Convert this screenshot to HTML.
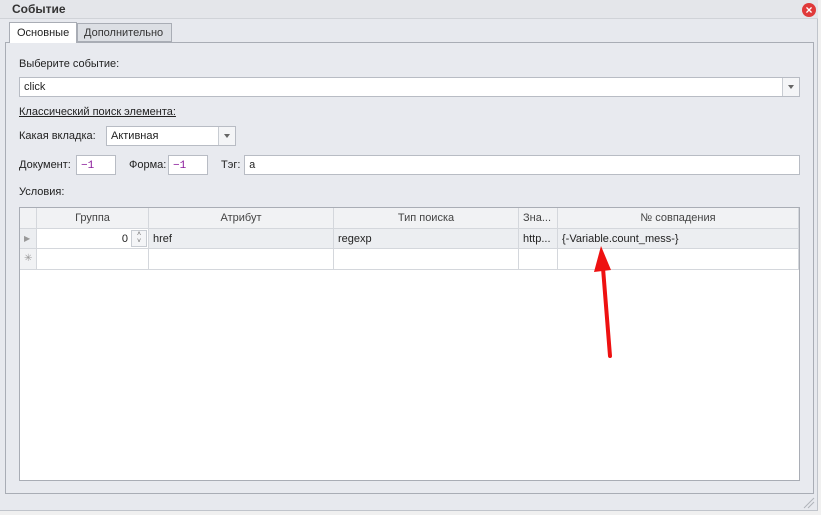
<!DOCTYPE html><html><head><meta charset="utf-8"><style>
*{box-sizing:border-box;margin:0;padding:0}
body{width:821px;height:515px;background:#f0f0f0;font-family:"Liberation Sans",sans-serif;font-size:11px;color:#222;position:relative;overflow:hidden}
.a{position:absolute}
.inp{position:absolute;background:#fff;border:1px solid #b8bcc4;padding:3px 4px;font-size:11px;height:20px;line-height:13px}
.dd{position:absolute;right:0;top:0;width:17px;height:18px;border-left:1px solid #c8ccd2;background:#f4f5f7}
.dd:after{content:"";position:absolute;left:5px;top:7px;border:3px solid transparent;border-top:4px solid #666}
.mono{font-family:"Liberation Mono",monospace;color:#8a1a9a}
.cell{position:absolute;border-right:1px solid #d4d7dc;border-bottom:1px solid #d4d7dc;height:100%;top:0;padding:4px 4px;white-space:nowrap;overflow:hidden}
.row{position:absolute;left:0;width:779px}
</style></head><body>
<div class="a" style="left:0;top:0;width:818px;height:511px;background:#e7e9ee;border-right:1px solid #c0c4cb;border-bottom:1px solid #c0c4cb"></div>
<div class="a" style="left:0;top:0;width:818px;height:19px;background:#e4e6ea;border-bottom:1px solid #d0d3d8"></div>
<div class="a" style="left:12px;top:2px;font-weight:bold;font-size:12px;color:#333">Событие</div>
<div class="a" style="left:802px;top:3px;width:14px;height:14px;border-radius:50%;background:#e03a3a;color:#fff;font-size:12px;font-weight:bold;text-align:center;line-height:14px">×</div>
<div class="a" style="left:5px;top:42px;width:809px;height:452px;border:1px solid #a9adb5;background:#e8eaef"></div>
<div class="a" style="left:9px;top:22px;width:68px;height:21px;background:#fff;border:1px solid #a9adb5;border-bottom:none;padding:4px 0 0 7px;font-size:11px">Основные</div>
<div class="a" style="left:77px;top:23px;width:95px;height:19px;background:#dcdfe4;border:1px solid #a9adb5;padding:3px 0 0 6px;color:#333">Дополнительно</div>
<div class="a" style="left:19px;top:58px">Выберите событие:</div>
<div class="inp" style="left:19px;top:77px;width:781px">click<div class="dd"></div></div>
<div class="a" style="left:19px;top:106px;text-decoration:underline">Классический поиск элемента:</div>
<div class="a" style="left:19px;top:130px">Какая вкладка:</div>
<div class="inp" style="left:106px;top:126px;width:130px">Активная<div class="dd"></div></div>
<div class="a" style="left:19px;top:159px">Документ:</div>
<div class="inp" style="left:76px;top:155px;width:40px"><span class="mono">−1</span></div>
<div class="a" style="left:129px;top:159px">Форма:</div>
<div class="inp" style="left:168px;top:155px;width:40px"><span class="mono">−1</span></div>
<div class="a" style="left:221px;top:159px">Тэг:</div>
<div class="inp" style="left:244px;top:155px;width:556px"><span style="font-family:'Liberation Mono',monospace">a</span></div>
<div class="a" style="left:19px;top:186px">Условия:</div>
<div class="a" style="left:19px;top:207px;width:781px;height:274px;background:#fff;border:1px solid #a9adb5">
 <div class="row" style="top:0;height:21px;background:#f1f2f4;color:#444">
  <div class="cell" style="left:0;width:17px"></div>
  <div class="cell" style="left:17px;width:112px;text-align:center">Группа</div>
  <div class="cell" style="left:129px;width:185px;text-align:center">Атрибут</div>
  <div class="cell" style="left:314px;width:185px;text-align:center">Тип поиска</div>
  <div class="cell" style="left:499px;width:39px">Зна...</div>
  <div class="cell" style="left:538px;width:241px;text-align:center">№ совпадения</div>
 </div>
 <div class="row" style="top:21px;height:20px;background:#eceef1">
  <div class="cell" style="left:0;width:17px;color:#999;font-size:8px;padding-top:5px">▶</div>
  <div class="cell" style="left:17px;width:112px;background:#fff;text-align:right;padding-right:20px">0<span class="a" style="right:1px;top:1px;width:16px;height:17px;border:1px solid #c8ccd2;background:#f4f5f7;font-size:7px;line-height:7px;text-align:center;color:#666">˄<br>˅</span></div>
  <div class="cell" style="left:129px;width:185px">href</div>
  <div class="cell" style="left:314px;width:185px">regexp</div>
  <div class="cell" style="left:499px;width:39px">http...</div>
  <div class="cell" style="left:538px;width:241px">{-Variable.count_mess-}</div>
 </div>
 <div class="row" style="top:41px;height:21px">
  <div class="cell" style="left:0;width:17px;color:#999;font-size:10px;background:#f1f2f4">✳</div>
  <div class="cell" style="left:17px;width:112px"></div>
  <div class="cell" style="left:129px;width:185px"></div>
  <div class="cell" style="left:314px;width:185px"></div>
  <div class="cell" style="left:499px;width:39px"></div>
  <div class="cell" style="left:538px;width:241px"></div>
 </div>
</div>
<svg class="a" style="left:0;top:0" width="821" height="515">
<line x1="610" y1="356" x2="603" y2="268" stroke="#ee1111" stroke-width="4" stroke-linecap="round"/>
<polygon points="601,246 594,272 611,270" fill="#ee1111"/>
<g stroke="#b0b4ba"><line x1="804" y1="508" x2="814" y2="498"/><line x1="808" y1="508" x2="814" y2="502"/></g>
</svg>
</body></html>
